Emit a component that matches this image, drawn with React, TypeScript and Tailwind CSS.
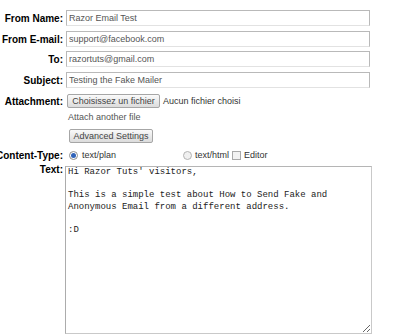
import React from "react";

const sans = { fontFamily: '"Liberation Sans", Arial, sans-serif' };

function Label({ children, className = "" }: { children: React.ReactNode; className?: string }) {
  return (
    <div className={`flex w-[63px] shrink-0 justify-end whitespace-nowrap text-[10px] font-bold leading-[11px] text-black ${className}`}>
      {children}
    </div>
  );
}

function TextField({ value, className = "" }: { value: string; className?: string }) {
  return (
    <input
      readOnly
      value={value}
      style={sans}
      className={`h-[16px] w-[304px] border border-[#b9b9b9] border-b-[#e2e2e2] bg-white px-[2px] text-[9px] text-[#555] outline-none ${className}`}
    />
  );
}

function Btn({ children, className = "" }: { children: React.ReactNode; className?: string }) {
  return (
    <div
      className={`flex h-[14px] items-center rounded-[2px] border border-[#a6a6a6] bg-gradient-to-b from-[#fafafa] to-[#dcdcdc] text-[9px] leading-none text-[#444] whitespace-nowrap ${className}`}
    >
      {children}
    </div>
  );
}

export default function App() {
  const text =
    "Hi Razor Tuts' visitors,\n\nThis is a simple test about How to Send Fake and\nAnonymous Email from a different address.\n\n:D";
  return (
    <div style={sans} className="h-[336px] w-[400px] overflow-hidden bg-white pt-[10px]">
      <div className="flex flex-col">
        <div className="flex items-center gap-[3px]">
          <Label>From Name:</Label>
          <TextField value="Razor Email Test" />
        </div>
        <div className="mt-[5px] flex items-center gap-[3px]">
          <Label>From E-mail:</Label>
          <TextField value="support@facebook.com" />
        </div>
        <div className="mt-[4px] flex items-center gap-[3px]">
          <Label>To:</Label>
          <TextField value="razortuts@gmail.com" />
        </div>
        <div className="mt-[5px] flex items-center gap-[3px]">
          <Label>Subject:</Label>
          <TextField value="Testing the Fake Mailer" />
        </div>
        <div className="mt-[6px] flex items-center gap-[3px]">
          <Label>Attachment:</Label>
          <div className="flex items-center">
            <Btn className="ml-px w-[93px] justify-center">Choisissez un fichier</Btn>
            <span className="ml-[3px] text-[9px] leading-[11px] text-[#333]">Aucun fichier choisi</span>
          </div>
        </div>
        <div className="mt-[4px] flex items-center gap-[3px]">
          <div className="w-[63px] shrink-0" />
          <span className="ml-[2px] text-[9px] leading-[11px] text-[#555]">Attach another file</span>
        </div>
        <div className="mt-[6px] flex items-center gap-[3px]">
          <div className="w-[63px] shrink-0" />
          <Btn className="ml-[3px] w-[84px] justify-center">Advanced Settings</Btn>
        </div>
        <div className="mt-[7px] flex h-[11px] items-center gap-[3px]">
          <Label>Content-Type:</Label>
          <div className="flex items-center text-[9px] leading-[11px] text-[#333]">
            <span className="ml-[3px] flex h-[9px] w-[9px] items-center justify-center rounded-full border border-[#8d8d8d] bg-white">
              <span className="h-[5px] w-[5px] rounded-full bg-[#2f62b8]" />
            </span>
            <span className="ml-[4px]">text/plan</span>
            <span className="ml-[67px] h-[9px] w-[9px] rounded-full border border-[#b3b3b3] bg-[#f0f0f0]" />
            <span className="ml-[3px]">text/html</span>
            <span className="ml-[3px] h-[9px] w-[9px] border border-[#a9a9a9] bg-[#f2f2f2]" />
            <span className="ml-[3px]">Editor</span>
          </div>
        </div>
        <div className="mt-[5px] flex items-start gap-[3px]">
          <Label className="-mt-[2px]">Text:</Label>
          <textarea
            readOnly
            defaultValue={text}
            style={{ fontFamily: '"Liberation Mono", "Courier New", monospace' }}
            className="-ml-px h-[168px] w-[307px] resize border border-[#c9c9c9] border-l-[#acacac] border-t-[#b5b5b5] bg-white px-[2px] pt-0 text-[9px] leading-[11.5px] text-[#222] outline-none"
          />
        </div>
      </div>
    </div>
  );
}
